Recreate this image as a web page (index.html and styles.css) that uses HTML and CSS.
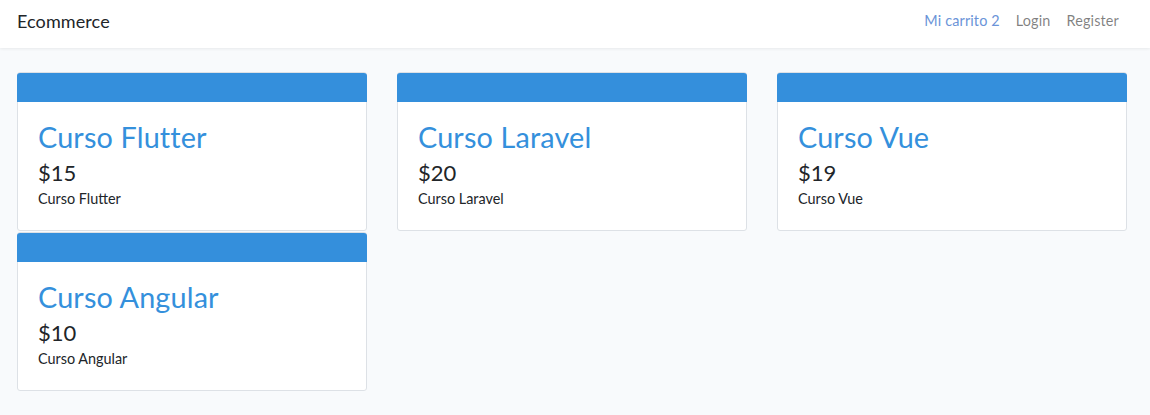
FILE: index.html
```html
<!DOCTYPE html>
<html lang="es">
<head>
<meta charset="utf-8">
<title>Ecommerce</title>
<link rel="stylesheet" href="styles.css">
</head>
<body>
<nav class="navbar">
  <div class="container nav-inner">
    <a class="brand" href="#">Ecommerce</a>
    <ul class="nav-links">
      <li><a class="nav-link cart" href="#">Mi carrito 2</a></li>
      <li><a class="nav-link" href="#">Login</a></li>
      <li><a class="nav-link" href="#">Register</a></li>
    </ul>
  </div>
</nav>
<main class="main">
  <div class="container grid">
    <div class="card">
      <div class="card-header"></div>
      <div class="card-body">
        <h2 class="title">Curso Flutter</h2>
        <h4 class="price">$15</h4>
        <p class="desc">Curso Flutter</p>
      </div>
    </div>
    <div class="card">
      <div class="card-header"></div>
      <div class="card-body">
        <h2 class="title">Curso Laravel</h2>
        <h4 class="price">$20</h4>
        <p class="desc">Curso Laravel</p>
      </div>
    </div>
    <div class="card">
      <div class="card-header"></div>
      <div class="card-body">
        <h2 class="title">Curso Vue</h2>
        <h4 class="price">$19</h4>
        <p class="desc">Curso Vue</p>
      </div>
    </div>
    <div class="card">
      <div class="card-header"></div>
      <div class="card-body">
        <h2 class="title">Curso Angular</h2>
        <h4 class="price">$10</h4>
        <p class="desc">Curso Angular</p>
      </div>
    </div>
  </div>
</main>
</body>
</html>
```

FILE: styles.css
```css
* { box-sizing: border-box; }
html, body { margin: 0; padding: 0; }
body {
  background: #f8fafc;
  font-family: "Lato", "Noto Sans", sans-serif;
  font-size: 14.4px;
  line-height: 1.6;
  color: #212529;
}
a { text-decoration: none; }
.container {
  width: 1110px;
  margin-left: 17px;
}
.navbar {
  background: #fff;
  height: 48px;
  box-shadow: 0 1px 3px rgba(0,0,0,0.07);
}
.nav-inner {
  height: 48px;
  display: flex;
  align-items: center;
  justify-content: space-between;
}
.brand {
  color: #212529;
  font-size: 18px;
  line-height: 1;
  padding-bottom: 6px;
  letter-spacing: 0.1px;
}
.nav-links {
  list-style: none;
  margin: 0;
  padding: 0 0 7px;
  display: flex;
}
.nav-link {
  display: block;
  padding: 0 8px;
  color: rgba(0,0,0,0.5);
  font-size: 14.4px;
  letter-spacing: 0.15px;
}
.nav-link.cart { color: #6b94d8; }
.main { padding-top: 24px; }
.grid {
  display: grid;
  grid-template-columns: repeat(3, 350px);
  column-gap: 30px;
  row-gap: 1px;
  align-items: start;
}
.card {
  background: #fff;
  border: 1px solid #dde1e6;
  border-radius: 3px;
  height: 159px;
}
.card-header {
  background: #348fdc;
  height: 29px;
  margin: 0 -1px;
  border-radius: 3px 3px 0 0;
}
.card-body {
  padding: 18px 20px 20px;
}
.title {
  margin: 0 0 5px;
  font-size: 28.8px;
  font-weight: 400;
  line-height: 1.2;
  color: #3490dc;
  letter-spacing: 0.15px;
}
.price {
  margin: 0 0 1px;
  font-size: 22px;
  font-weight: 400;
  line-height: 1.2;
}
.desc {
  margin: 0;
  font-size: 14.4px;
  line-height: 1.6;
}
```
